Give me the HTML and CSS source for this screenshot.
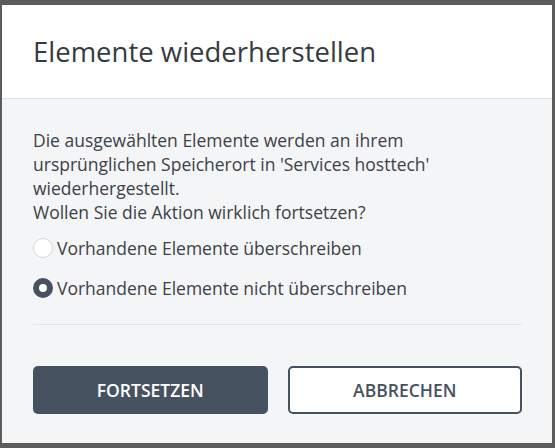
FILE: index.html
```html
<!DOCTYPE html>
<html lang="de">
<head>
<meta charset="utf-8">
<link rel="stylesheet" href="styles.css">
</head>
<body>
<div class="frame">
  <div class="dialog">
    <div class="header">
      <h1 class="title">Elemente wiederherstellen</h1>
    </div>
    <div class="body">
      <p class="message">Die ausgewählten Elemente werden an ihrem ursprünglichen Speicherort in 'Services hosttech' wiederhergestellt.<br>Wollen Sie die Aktion wirklich fortsetzen?</p>
      <div class="options">
        <label class="option"><span class="radio"></span><span class="label">Vorhandene Elemente überschreiben</span></label>
        <label class="option"><span class="radio checked"></span><span class="label">Vorhandene Elemente nicht überschreiben</span></label>
      </div>
      <div class="divider"></div>
      <div class="actions">
        <button class="btn primary">FORTSETZEN</button>
        <button class="btn secondary">ABBRECHEN</button>
      </div>
    </div>
  </div>
</div>
</body>
</html>
```
FILE: styles.css
```css
* { box-sizing: border-box; }
html, body { margin: 0; padding: 0; }
body {
  width: 555px;
  height: 448px;
  background: #5c5c5c;
  font-family: "Open Sans", "Liberation Sans", sans-serif;
  overflow: hidden;
}
.frame {
  padding: 5px 3px 5px 2px;
  height: 448px;
}
.dialog {
  height: 438px;
  background: #f4f5f7;
  display: flex;
  flex-direction: column;
}
.header {
  background: #ffffff;
  height: 94px;
  border-bottom: 1px solid #e1e3e6;
  padding: 0 31px;
  display: flex;
  align-items: center;
}
.title {
  margin: 0;
  font-weight: 400;
  font-size: 27.5px;
  color: #363b43;
}
.body {
  padding: 29px 30px 0 31px;
  display: flex;
  flex-direction: column;
}
.message {
  margin: 0;
  max-width: 430px;
  font-size: 17.5px;
  line-height: 24px;
  color: #3d4147;
}
.options {
  display: flex;
  flex-direction: column;
  gap: 16px;
  margin-top: 12px;
}
.option {
  display: flex;
  align-items: center;
  gap: 4px;
  font-size: 17.5px;
  line-height: 24px;
  color: #3d4147;
}
.radio {
  width: 20px;
  height: 20px;
  border-radius: 50%;
  border: 1px solid #d3d6da;
  background: #ffffff;
  flex: none;
}
.radio.checked {
  border: 6px solid #46525f;
  background: #ffffff;
}
.divider {
  height: 1px;
  background: #e1e3e6;
  margin-top: 24px;
}
.actions {
  display: flex;
  gap: 20px;
  margin-top: 41px;
}
.btn {
  width: 235px;
  height: 48px;
  border-radius: 5px;
  font-family: "Open Sans", "Liberation Sans", sans-serif;
  font-size: 17.5px;
  font-weight: 600;
  cursor: pointer;
}
.btn.primary {
  background: #46525f;
  color: #ffffff;
  border: none;
}
.btn.secondary {
  background: #ffffff;
  color: #46525f;
  border: 2px solid #46525f;
}
```
